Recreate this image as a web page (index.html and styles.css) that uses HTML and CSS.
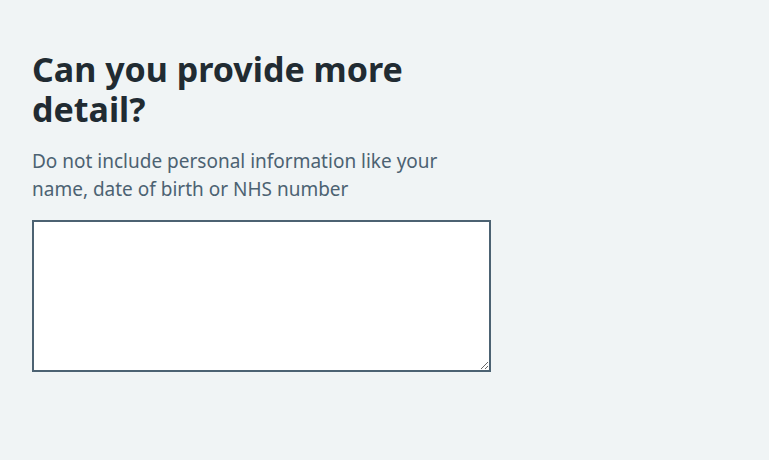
FILE: index.html
```html
<!DOCTYPE html>
<html lang="en">
<head>
<meta charset="utf-8">
<title>Can you provide more detail?</title>
<link rel="stylesheet" href="styles.css">
</head>
<body>
<main class="page">
  <div class="form-group">
    <h1 class="label"><label for="more-detail">Can you provide more detail?</label></h1>
    <div class="hint" id="more-detail-hint">Do not include personal information like your name, date of birth or NHS number</div>
    <textarea class="textarea" id="more-detail" name="more-detail" rows="5" aria-describedby="more-detail-hint"></textarea>
  </div>
</main>
</body>
</html>
```

FILE: styles.css
```css
html, body {
  margin: 0;
  padding: 0;
  background: #f0f4f5;
}
body {
  font-family: "Noto Sans", "Open Sans", "Liberation Sans", sans-serif;
  color: #212b32;
}
.page {
  padding: 49px 32px 0;
}
.form-group {
  width: 459px;
  display: flex;
  flex-direction: column;
}
.label {
  margin: 0 0 18px;
  font-size: 34px;
  line-height: 40px;
  font-weight: 700;
  color: #212b32;
}
.hint {
  margin: 0 0 17px;
  font-size: 19px;
  line-height: 28px;
  color: #4c6272;
}
.textarea {
  box-sizing: border-box;
  width: 459px;
  height: 152px;
  margin: 0;
  padding: 4px;
  border: 2px solid #4c6272;
  border-radius: 0;
  background: #ffffff;
  font-family: inherit;
  font-size: 19px;
  resize: vertical;
}
```
